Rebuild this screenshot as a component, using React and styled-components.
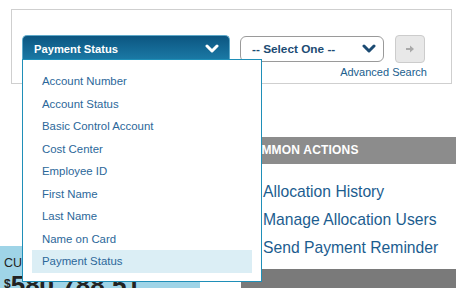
import React from "react";
import styled, { createGlobalStyle } from "styled-components";

const GlobalStyle = createGlobalStyle`
  body {
    margin: 0;
    background: #ffffff;
    font-family: "Liberation Sans", Arial, sans-serif;
    overflow: hidden;
  }
`;

const Page = styled.div`
  width: 456px;
  height: 288px;
  overflow: hidden;
  position: relative;
`;

const SearchBox = styled.div`
  margin: 9px 4px 0 11px;
  height: 75px;
  box-sizing: border-box;
  border: 1px solid #cfcfcf;
  padding: 25px 0 0 10px;
  display: flex;
  gap: 10px;
  position: relative;
  z-index: 2;
`;

const FieldWrap = styled.div`
  position: relative;
  width: 208px;
`;

const FieldButton = styled.div`
  height: 25px;
  box-sizing: border-box;
  border-radius: 5px 5px 0 0;
  background: linear-gradient(#0c5681, #1b7aa6);
  border: 1px solid #5fa9c9;
  border-bottom: none;
  display: flex;
  align-items: center;
  justify-content: space-between;
  padding: 2px 10px 0 11px;
  color: #ffffff;
  font-weight: bold;
  font-size: 11.2px;
`;

const Menu = styled.ul`
  position: absolute;
  left: 0;
  top: 24px;
  width: 240px;
  height: 223px;
  box-sizing: border-box;
  margin: 0;
  padding: 10px 9px 0;
  list-style: none;
  background: #ffffff;
  border: 1.5px solid #1f8fb8;
`;

const MenuItem = styled.li`
  height: 22.5px;
  line-height: 22.5px;
  padding-left: 10px;
  font-size: 11.4px;
  color: #2b679a;
  background: ${(p) => (p.$active ? "#dbeef5" : "transparent")};
`;

const RightControls = styled.div`
  display: flex;
  flex-direction: column;
  align-items: flex-end;
`;

const ControlRow = styled.div`
  display: flex;
  align-items: flex-start;
  gap: 11px;
`;

const Select = styled.div`
  margin-top: 1px;
  width: 144px;
  height: 26px;
  box-sizing: border-box;
  border: 1px solid #9a9a9a;
  border-radius: 6px;
  display: flex;
  align-items: center;
  justify-content: space-between;
  padding: 0 7px 0 11px;
  font-size: 11.8px;
  font-weight: bold;
  color: #1c4b73;
`;

const GoButton = styled.div`
  width: 30px;
  height: 28px;
  box-sizing: border-box;
  border: 1px solid #cccccc;
  border-radius: 4px;
  background: #e8e8e8;
  display: flex;
  align-items: center;
  justify-content: center;
`;

const AdvancedLink = styled.a`
  margin: 3px -2px 0 0;
  font-size: 11px;
  color: #205e8e;
  text-decoration: none;
`;

const Main = styled.div`
  display: grid;
  grid-template-columns: 200px 1fr;
  column-gap: 41px;
  margin-top: 2px;
`;

const LeftCol = styled.div`
  padding-top: 160px;
`;

const Summary = styled.div`
  background: #9fd4e7;
  height: 60px;
  padding: 10px 0 0 4px;
  box-sizing: border-box;
  color: #222222;
`;

const SummaryLabel = styled.div`
  font-size: 12.5px;
  line-height: 14px;
`;

const Amount = styled.div`
  font-size: 26px;
  font-weight: bold;
  line-height: 28px;
  sup {
    font-size: 12px;
    vertical-align: 6px;
  }
`;

const RightCol = styled.div`
  padding-top: 51px;
`;

const SectionHeader = styled.div`
  height: 27px;
  background: #8c8c8c;
  color: #ffffff;
  font-size: 12px;
  font-weight: bold;
  letter-spacing: 0.2px;
  line-height: 27px;
  padding-left: 2px;
`;

const Links = styled.div`
  display: flex;
  flex-direction: column;
  padding: 14px 0 0 22px;
`;

const ActionLink = styled.a`
  font-size: 15.7px;
  line-height: 28px;
  color: #1c5d8f;
  text-decoration: none;
`;

const BottomBar = styled.div`
  margin-top: 7px;
  height: 20px;
  background: #7a7a7a;
`;

const Chevron = ({ color }) => (
  <svg width="14" height="10" viewBox="0 0 14 10">
    <polyline
      points="2,2 7,7 12,2"
      fill="none"
      stroke={color}
      strokeWidth="3"
      strokeLinecap="round"
      strokeLinejoin="round"
    />
  </svg>
);

const fields = [
  "Account Number",
  "Account Status",
  "Basic Control Account",
  "Cost Center",
  "Employee ID",
  "First Name",
  "Last Name",
  "Name on Card",
  "Payment Status",
];

const App = () => {
  return (
    <Page>
      <GlobalStyle />
      <SearchBox>
        <FieldWrap>
          <FieldButton>
            Payment Status
            <Chevron color="#ffffff" />
          </FieldButton>
          <Menu>
            {fields.map((f) => (
              <MenuItem key={f} $active={f === "Payment Status"}>
                {f}
              </MenuItem>
            ))}
          </Menu>
        </FieldWrap>
        <RightControls>
          <ControlRow>
            <Select>
              -- Select One --
              <Chevron color="#1c4b73" />
            </Select>
            <GoButton>
              <svg width="10" height="10" viewBox="0 0 10 10">
                <path d="M1 4h4V1.5L9 5 5 8.5V6H1z" fill="#a9a9a9" />
              </svg>
            </GoButton>
          </ControlRow>
          <AdvancedLink href="#">Advanced Search</AdvancedLink>
        </RightControls>
      </SearchBox>
      <Main>
        <LeftCol>
          <Summary>
            <SummaryLabel>CURRENT BALANCE</SummaryLabel>
            <Amount>
              <sup>$</sup>580,788.51
            </Amount>
          </Summary>
        </LeftCol>
        <RightCol>
          <SectionHeader>COMMON ACTIONS</SectionHeader>
          <Links>
            <ActionLink href="#">Allocation History</ActionLink>
            <ActionLink href="#">Manage Allocation Users</ActionLink>
            <ActionLink href="#">Send Payment Reminder</ActionLink>
          </Links>
          <BottomBar />
        </RightCol>
      </Main>
    </Page>
  );
};

export default App;
